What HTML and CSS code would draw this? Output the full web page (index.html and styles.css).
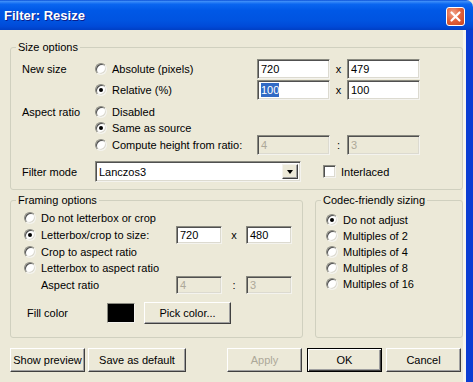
FILE: index.html
```html
<!DOCTYPE html>
<html lang="en">
<head>
  <meta charset="UTF-8" />
  <title>Filter: Resize</title>
  <link rel="stylesheet" href="styles.css">
</head>
<body>
  <div class="window">
    <div class="titlebar">
      <span class="title">Filter: Resize</span>
      <span class="close">
        <svg width="19" height="19" viewBox="0 0 19 19">
          <path d="M5.5 5.5 L13.5 13.5 M13.5 5.5 L5.5 13.5" stroke="#fff" stroke-width="2.2" stroke-linecap="round"/>
        </svg>
      </span>
    </div>
    <div class="frame">
      <div class="client">

        <div class="group size-group">
          <span class="legend">Size options</span>
          <div class="row r1">
            <span class="lab">New size</span>
            <label class="opt"><span class="radio"></span>Absolute (pixels)</label>
            <span class="edit">720</span>
            <span class="sep">x</span>
            <span class="edit">479</span>
          </div>
          <div class="row r2">
            <span class="lab"></span>
            <label class="opt"><span class="radio on"></span>Relative (%)</label>
            <span class="edit"><span class="sel">100</span></span>
            <span class="sep">x</span>
            <span class="edit">100</span>
          </div>
          <div class="row r3">
            <span class="lab">Aspect ratio</span>
            <label class="opt"><span class="radio"></span>Disabled</label>
          </div>
          <div class="row r4">
            <span class="lab"></span>
            <label class="opt"><span class="radio on"></span>Same as source</label>
          </div>
          <div class="row r5">
            <span class="lab"></span>
            <label class="opt"><span class="radio"></span>Compute height from ratio:</label>
            <span class="edit off">4</span>
            <span class="sep">:</span>
            <span class="edit off">3</span>
          </div>
          <div class="row r6">
            <span class="lab">Filter mode</span>
            <div class="select">
              <span class="val">Lanczos3</span>
              <span class="drop"><span class="tri"></span></span>
            </div>
            <label class="check-opt"><span class="check"></span>Interlaced</label>
          </div>
        </div>

        <div class="lower">
          <div class="group framing">
            <span class="legend">Framing options</span>
            <div class="frow f1"><span class="radio"></span>Do not letterbox or crop</div>
            <div class="frow f2">
              <span class="radio on"></span><span class="ftext">Letterbox/crop to size:</span>
              <span class="edit small">720</span>
              <span class="sep wide">x</span>
              <span class="edit small">480</span>
            </div>
            <div class="frow f3"><span class="radio"></span>Crop to aspect ratio</div>
            <div class="frow f4"><span class="radio"></span>Letterbox to aspect ratio</div>
            <div class="frow f5">
              <span class="ftext indent">Aspect ratio</span>
              <span class="edit small off">4</span>
              <span class="sep wide">:</span>
              <span class="edit small off">3</span>
            </div>
            <div class="frow f6">
              <span class="fill-lab">Fill color</span>
              <span class="swatch"></span>
              <button class="btn pick">Pick color...</button>
            </div>
          </div>

          <div class="group codec">
            <span class="legend">Codec-friendly sizing</span>
            <div class="crow"><span class="radio on"></span>Do not adjust</div>
            <div class="crow"><span class="radio"></span>Multiples of 2</div>
            <div class="crow"><span class="radio"></span>Multiples of 4</div>
            <div class="crow"><span class="radio"></span>Multiples of 8</div>
            <div class="crow"><span class="radio"></span>Multiples of 16</div>
          </div>
        </div>

        <div class="buttons">
          <button class="btn">Show preview</button>
          <button class="btn wide-btn">Save as default</button>
          <button class="btn push" disabled>Apply</button>
          <button class="btn default">OK</button>
          <button class="btn">Cancel</button>
        </div>

      </div>
    </div>
  </div>
</body>
</html>
```

FILE: styles.css
```css
* {
  box-sizing: border-box;
  margin: 0;
  padding: 0;
}
body {
  font-family: "Liberation Sans", Arial, sans-serif;
  font-size: 11px;
  color: #000;
  background: #ece9d8;
}
.window {
  width: 473px;
  height: 382px;
  overflow: hidden;
  background: #ece9d8;
}

/* title bar */
.titlebar {
  height: 30px;
  display: flex;
  align-items: center;
  justify-content: space-between;
  padding: 0 8px 0 4px;
  border-top-right-radius: 7px;
  background: linear-gradient(to bottom, #0a4fd6 0%, #3b8cf8 5%, #0a66f0 14%, #0058e6 35%, #0053e0 70%, #004ad8 88%, #003fc4 100%);
}
.title {
  color: #fff;
  font-weight: bold;
  font-size: 13px;
  text-shadow: 1px 1px 0 #0a1e8c;
  margin-top: 1px;
}
.close {
  width: 19px;
  height: 19px;
  margin-top: 2px;
  border: 1px solid #fff;
  border-radius: 3px;
  background: radial-gradient(circle at 35% 30%, #f0a48a 0%, #e2643f 45%, #c8421d 100%);
  display: flex;
  align-items: center;
  justify-content: center;
}
.close svg {
  display: block;
  margin: -1px;
}

/* body */
.frame {
  height: 352px;
  border-right: 7px solid #0b3dd3;
  box-shadow: inset -3px 0 0 #f7f5ee;
}
.client {
  padding: 17px 0 0 10px;
}
.group {
  position: relative;
  border: 1px solid #d0d0bf;
  border-radius: 3px;
}
.legend {
  position: absolute;
  top: -7px;
  left: 5px;
  padding: 0 2px;
  line-height: 13px;
  background: #ece9d8;
}

/* controls */
.radio {
  display: inline-block;
  flex: none;
  position: relative;
  width: 12px;
  height: 12px;
  margin-right: 5px;
  border-radius: 50%;
  background: #fff;
  border: 1px solid;
  border-color: #8a8a80 #f4f3ee #f4f3ee #8a8a80;
  box-shadow: inset 1px 1px 0 #505050, inset -1px -1px 0 #dcdad0;
}
.radio.on::after {
  content: "";
  position: absolute;
  left: 3px;
  top: 3px;
  width: 4px;
  height: 4px;
  border-radius: 50%;
  background: #000;
}
.check {
  display: inline-block;
  width: 13px;
  height: 13px;
  margin-right: 5px;
  background: #fff;
  border: 1px solid;
  border-color: #8a8a80 #f4f3ee #f4f3ee #8a8a80;
  box-shadow: inset 1px 1px 0 #505050, inset -1px -1px 0 #dcdad0;
}
.edit {
  display: flex;
  align-items: center;
  width: 73px;
  height: 20px;
  padding-left: 3px;
  background: #fff;
  border: 1px solid;
  border-color: #8a8a80 #f4f3ee #f4f3ee #8a8a80;
  box-shadow: inset 1px 1px 0 #505050, inset -1px -1px 0 #dcdad0;
}
.edit.off {
  background: #ece9d8;
  color: #aca899;
}
.edit.small {
  width: 46px;
  height: 18px;
}
.sel {
  background: #316ac5;
  color: #fff;
  padding: 1px 0;
}
.sep {
  width: 17px;
  text-align: center;
}
.sep.wide {
  width: 24px;
}
.btn {
  font-family: inherit;
  font-size: 11px;
  color: #000;
  width: 75px;
  height: 24px;
  background: #ece9d8;
  border: 1px solid;
  border-color: #fff #404040 #404040 #fff;
  box-shadow: inset -1px -1px 0 #a0a0a0;
}
.btn:disabled {
  color: #aca899;
}
.btn.default {
  border-color: #000;
  box-shadow: inset 1px 1px 0 #fff, inset -1px -1px 0 #404040, inset -2px -2px 0 #a0a0a0;
}

/* size options */
.size-group {
  width: 453px;
  height: 143px;
  padding: 11px 0 0 11px;
}
.row {
  display: flex;
  align-items: center;
}
.lab {
  width: 73px;
  flex: none;
}
.opt {
  width: 162px;
  display: flex;
  align-items: center;
}
.r1 { height: 20px; }
.r2 { height: 20px; margin-top: 1px; }
.r3 { height: 16px; margin-top: 4px; }
.r4 { height: 15px; }
.r5 { height: 20px; }
.r6 { height: 21px; margin-top: 6px; }
.select {
  width: 206px;
  height: 21px;
  display: flex;
  align-items: center;
  justify-content: space-between;
  background: #fff;
  border: 1px solid;
  border-color: #8a8a80 #f4f3ee #f4f3ee #8a8a80;
  box-shadow: inset 1px 1px 0 #505050, inset -1px -1px 0 #dcdad0;
  padding: 2px 2px 2px 3px;
}
.drop {
  width: 16px;
  height: 15px;
  display: flex;
  align-items: center;
  justify-content: center;
  background: #ece9d8;
  border: 1px solid;
  border-color: #f4f3ee #404040 #404040 #f4f3ee;
  box-shadow: inset -1px -1px 0 #a0a0a0;
}
.tri {
  width: 0;
  height: 0;
  border-left: 3.5px solid transparent;
  border-right: 3.5px solid transparent;
  border-top: 4px solid #000;
}
.check-opt {
  display: flex;
  align-items: center;
  margin-left: 22px;
}

/* lower groups */
.lower {
  display: flex;
  gap: 12px;
  margin-top: 10px;
}
.framing {
  width: 293px;
  height: 138px;
  padding: 9px 0 0 13px;
}
.frow {
  display: flex;
  align-items: center;
  height: 16px;
}
.frow.f2, .frow.f5 {
  height: 18px;
}
.ftext {
  width: 135px;
}
.ftext.indent {
  margin-left: 17px;
}
.frow.f6 {
  height: 22px;
  margin-top: 8px;
}
.fill-lab {
  width: 80px;
  margin-left: 3px;
}
.swatch {
  width: 28px;
  height: 20px;
  background: #000;
  border: 1px solid;
  border-color: #8a8a80 #f4f3ee #f4f3ee #8a8a80;
  margin-right: 9px;
}
.btn.pick {
  width: 87px;
  height: 22px;
}
.codec {
  width: 148px;
  height: 138px;
  padding: 11px 0 0 10px;
}
.crow {
  display: flex;
  align-items: center;
  height: 16px;
}

/* bottom buttons */
.buttons {
  display: flex;
  gap: 4px;
  margin-top: 10px;
  padding-right: 5px;
}
.btn.wide-btn {
  width: 98px;
  margin-left: -1px;
}
.btn.push {
  margin-left: auto;
  margin-right: 1px;
}
```
